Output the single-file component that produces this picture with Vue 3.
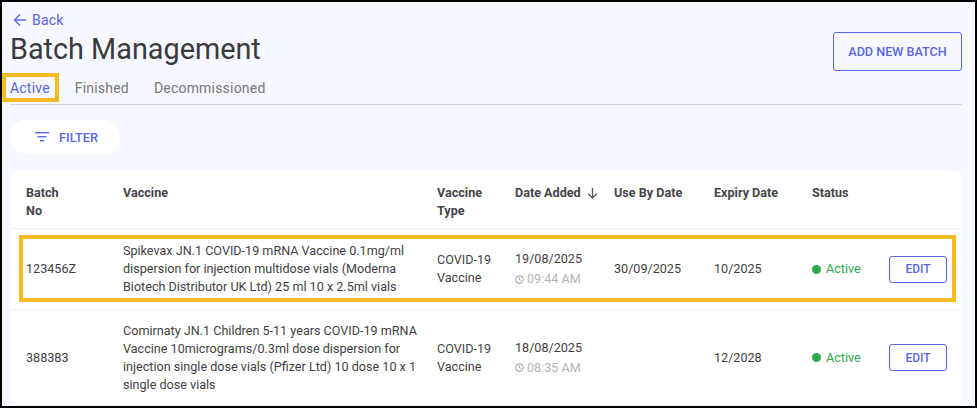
<script setup>
const columns = [
  { key: 'batch', label: 'Batch No' },
  { key: 'vaccine', label: 'Vaccine' },
  { key: 'type', label: 'Vaccine Type' },
  { key: 'added', label: 'Date Added', sort: true },
  { key: 'useBy', label: 'Use By Date' },
  { key: 'expiry', label: 'Expiry Date' },
  { key: 'state', label: 'Status' },
  { key: 'action', label: '' },
]
const rows = [
  {
    batch: '123456Z',
    vaccine: 'Spikevax JN.1 COVID-19 mRNA Vaccine 0.1mg/ml dispersion for injection multidose vials (Moderna Biotech Distributor UK Ltd) 25 ml 10 x 2.5ml vials',
    type: 'COVID-19 Vaccine',
    date: '19/08/2025',
    time: '09:44 AM',
    useBy: '30/09/2025',
    expiry: '10/2025',
    highlighted: true,
  },
  {
    batch: '388383',
    vaccine: 'Comirnaty JN.1 Children 5-11 years COVID-19 mRNA Vaccine 10micrograms/0.3ml dose dispersion for injection single dose vials (Pfizer Ltd) 10 dose 10 x 1 single dose vials',
    type: 'COVID-19 Vaccine',
    date: '18/08/2025',
    time: '08:35 AM',
    useBy: '',
    expiry: '12/2028',
    highlighted: false,
  },
]
</script>

<template>
  <div class="frame">
    <header class="top">
      <div class="heading">
        <a class="back">
          <svg width="14" height="14" viewBox="0 0 14 14" fill="none" stroke="currentColor" stroke-width="1.4">
            <path d="M13 7H1.8M7 1.6 1.6 7 7 12.4" />
          </svg>
          <span>Back</span>
        </a>
        <h1>Batch Management</h1>
      </div>
      <button class="btn add">ADD NEW BATCH</button>
    </header>

    <nav class="tabs">
      <span class="tab active">Active</span>
      <span class="tab">Finished</span>
      <span class="tab">Decommissioned</span>
    </nav>

    <button class="filter">
      <svg width="14" height="10" viewBox="0 0 14 10" fill="currentColor">
        <rect x="0" y="0" width="14" height="1.4" />
        <rect x="2.5" y="4" width="9" height="1.4" />
        <rect x="5" y="8" width="4" height="1.4" />
      </svg>
      <span>FILTER</span>
    </button>

    <section class="card">
      <div class="row head">
        <div v-for="c in columns" :key="c.key" class="cell" :class="c.key">
          <span>{{ c.label }}</span>
          <svg v-if="c.sort" class="sort" width="11" height="12" viewBox="0 0 11 12" fill="none" stroke="#55555c" stroke-width="1.3">
            <path d="M5.5 1v10M1.2 6.8 5.5 11l4.3-4.2" />
          </svg>
        </div>
      </div>
      <div v-for="r in rows" :key="r.batch" class="row body" :class="{ marked: r.highlighted }">
        <div class="cell batch">{{ r.batch }}</div>
        <div class="cell vaccine">{{ r.vaccine }}</div>
        <div class="cell type">{{ r.type }}</div>
        <div class="cell added">
          <div>{{ r.date }}</div>
          <div class="time">
            <svg width="9" height="9" viewBox="0 0 9 9" fill="none" stroke="#8f8f8f" stroke-width="0.9">
              <circle cx="4.5" cy="4.5" r="3.8" />
              <path d="M4.5 2.4v2.2l1.5 1" />
            </svg>
            <span>{{ r.time }}</span>
          </div>
        </div>
        <div class="cell useBy">{{ r.useBy }}</div>
        <div class="cell expiry">{{ r.expiry }}</div>
        <div class="cell status"><i class="dot"></i>Active</div>
        <div class="cell action"><button class="btn edit">EDIT</button></div>
      </div>
    </section>
  </div>
</template>

<style>
html, body { margin: 0; padding: 0; }
</style>

<style scoped>
* { box-sizing: border-box; }
.frame {
  width: 977px;
  height: 408px;
  overflow: hidden;
  position: relative;
  border: 2px solid #000;
  background: #f5f8fe;
  font-family: Roboto, sans-serif;
  color: #3f3f44;
  padding: 0 13px 0 9px;
}
.top {
  display: flex;
  justify-content: space-between;
  align-items: flex-start;
  height: 61px;
}
.heading { padding-top: 9px; }
.back {
  display: flex;
  align-items: center;
  gap: 5px;
  margin-left: 2px;
  color: #5a67e8;
  font-size: 14px;
  line-height: 18px;
  letter-spacing: 0.2px;
}
h1 {
  margin: 3px 0 0 -1px;
  font-size: 28.8px;
  line-height: 34px;
  font-weight: 400;
  color: #3a3a3e;
}
.btn {
  background: transparent;
  border: 1px solid #5566e6;
  border-radius: 3px;
  color: #5a67e8;
  font-family: Roboto, sans-serif;
  font-weight: 500;
  cursor: pointer;
  padding: 0;
}
.add {
  width: 129px;
  height: 39px;
  margin-top: 30px;
  font-size: 12.6px;
}
.tabs {
  display: flex;
  align-items: flex-start;
  height: 42px;
  margin-left: -1px;
  border-bottom: 1px solid #d3d3d8;
  padding-top: 15px;
  gap: 25px;
  font-size: 14px;
  line-height: 20px;
  letter-spacing: 0.2px;
  color: #77777d;
  position: relative;
}
.tab { display: block; }
.active {
  color: #5a67e8;
  position: relative;
}
.active::after {
  content: '';
  position: absolute;
  left: -8px;
  right: -9px;
  top: -5px;
  bottom: -4px;
  border: 4px solid #f5bc22;
}
.filter {
  display: flex;
  align-items: center;
  justify-content: center;
  gap: 10px;
  width: 110px;
  height: 34px;
  margin: 15px 0 0 -1px;
  padding: 0 0 0 3px;
  background: #fff;
  border: 0;
  border-radius: 17px;
  color: #5a67e8;
  font-family: Roboto, sans-serif;
  font-size: 12.7px;
  font-weight: 500;
}
.card {
  width: 950px;
  margin: 17px 0 0 0;
  background: #fff;
  border-radius: 4px 4px 0 0;
}
.row {
  display: grid;
  grid-template-columns: 97px 314px 78px 99px 100px 98px 77px 72px;
  padding-left: 15px;
  font-size: 12.6px;
  line-height: 18px;
  border-bottom: 1px solid #edeff8;
  position: relative;
}
.head {
  height: 58px;
  padding-top: 13px;
  font-weight: 700;
  color: #45454b;
}
.head .cell { padding-right: 6px; }
.head .batch span { display: block; width: 40px; }
.head .type span { display: block; width: 60px; }
.sort { margin-left: 6px; vertical-align: -2px; }
.body { align-items: center; font-weight: 400; }
.marked { height: 81px; }
.body:not(.marked) { height: 96px; }
.marked::after {
  content: '';
  position: absolute;
  left: 8px;
  right: 5px;
  top: 6px;
  bottom: 7px;
  border: 4px solid #f5bc22;
  pointer-events: none;
}
.vaccine { padding-right: 8px; }
.type { padding-right: 8px; }
.time {
  display: flex;
  align-items: center;
  gap: 3px;
  margin-top: 2px;
  color: #b3b3b3;
}
.status {
  display: flex;
  align-items: center;
  color: #2fa84f;
}
.dot {
  width: 9px;
  height: 9px;
  border-radius: 50%;
  background: #2fa84f;
  margin-right: 5px;
}
.edit {
  display: block;
  width: 58px;
  height: 27px;
  font-size: 12px;
}
</style>
